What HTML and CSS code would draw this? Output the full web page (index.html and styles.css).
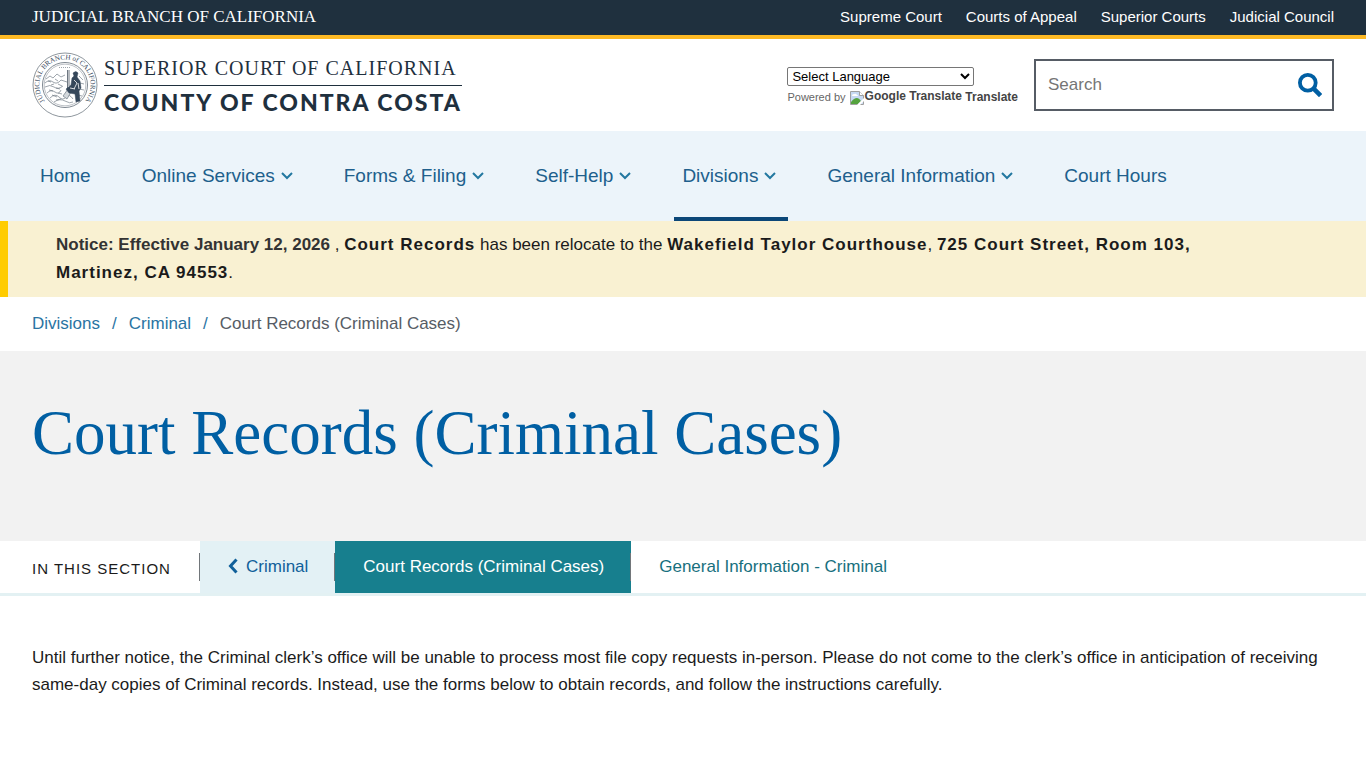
FILE: index.html
```html
<!DOCTYPE html>
<html lang="en">
<head>
    <meta charset="UTF-8">
    <meta name="viewport" content="width=device-width, initial-scale=1.0">
    <title>Court Records (Criminal Cases) | Superior Court of California | County of Contra Costa</title>
    <link rel="stylesheet" href="styles.css">
</head>
<body>

    <div class="topbar">
        <a class="topbar-brand" href="#">JUDICIAL BRANCH OF CALIFORNIA</a>
        <nav class="topbar-links">
            <a href="#">Supreme Court</a>
            <a href="#">Courts of Appeal</a>
            <a href="#">Superior Courts</a>
            <a href="#">Judicial Council</a>
        </nav>
    </div>

    <header class="header">
        <a class="logo" href="#">
            <svg class="seal" viewBox="0 0 66 66" fill="none" stroke="#5d6873">
                <circle cx="33" cy="33" r="32" stroke-width="0.7"/>
                <circle cx="33" cy="33" r="22.5" stroke-width="0.8"/>
                <circle cx="33" cy="33" r="20.8" stroke-width="0.4"/>
                <defs><path id="ring" d="M15 51.4A25.7 25.7 0 1 1 51 51.4"/></defs>
                <text class="seal-text"><textPath href="#ring" startOffset="50%" text-anchor="middle">JUDICIAL BRANCH of CALIFORNIA</textPath></text>
                <g stroke-width="0.6">
                    <path d="M27 15.5h12" stroke-dasharray="1 1"/>
                    <path d="M14 27l4-3 3 2 4-4 4 3 4-2M13 31q4-4 8-1t8-2l6 2M13 35q5-3 9 0t9-1M15 41q4-4 8-1t6-2M18 46q5-5 9-1t7 0 7 2M22 50q6-4 11-1t8 1"/>
                    <path d="M16 29l3 1M23 27l3 2M17 38l4 1M24 36l4 1M47 24l4 4M48 31l4 1M47 37l5 1M46 43l4 1M20 43l5 2M26 41l4 1M24 48l5-1M19 33l3-1M26 32l4 2"/>
                    <path d="M35.5 18v19M37 18v16" stroke-width="0.9"/>
                    <path d="M31 44l5-7 3 3-4 7z" fill="#d3d8dc"/>
                </g>
                <path d="M41 21q3-3 5 0l-1 4 3 4 1 7-2 3 1 10-4 1-1-8-6-1-3-4 5-4 1-7 2-2z" fill="#35475a" stroke="#35475a" stroke-width="0.5"/>
                <path d="M42 28l3 3-3 6M46 31l1 6M38 36l5 1" stroke="#fff" stroke-width="0.8"/>
            </svg>
            <span class="logo-text">
                <span class="logo-court">SUPERIOR COURT OF CALIFORNIA</span>
                <span class="logo-county">COUNTY OF CONTRA COSTA</span>
            </span>
        </a>

        <div class="header-tools">
            <div class="translate">
                <select class="translate-select" aria-label="Select Language">
                    <option>Select Language</option>
                </select>
                <div class="translate-credit">
                    <span>Powered by</span>
                    <a href="#">
                        <svg class="broken-image" viewBox="0 0 16 16">
                            <path d="M1.5 1.5h9l4 4v9h-13z" fill="#c6d9f3" stroke="#a0a0a0"/>
                            <path d="M10.5 1.5v4h4" fill="#fff" stroke="#a0a0a0"/>
                            <path d="M3 6q0-2 2-2 2-1 3 1 1 0 1 1z" fill="#fff"/>
                            <path d="M2 14v-2q3-4 6-4 2 0 4 3l-3 3z" fill="#55a33e"/>
                            <path d="M16 7L7 16h3l6-6z" fill="#fff"/>
                        </svg><span class="translate-alt">Google Translate</span>
                        <span>Translate</span>
                    </a>
                </div>
            </div>
            <form class="search">
                <input class="search-input" type="search" placeholder="Search" aria-label="Search">
                <button class="search-button" type="submit" aria-label="Submit search">
                    <svg viewBox="0 0 24 24" fill="none" stroke="#005fa3">
                        <circle cx="9.8" cy="9.8" r="7.9" stroke-width="3.8"/>
                        <path d="M15.6 15.6L22.6 22.6" stroke-width="4.6"/>
                    </svg>
                </button>
            </form>
        </div>
    </header>

    <nav class="main-nav">
        <a href="#">Home</a>
        <a href="#">Online Services <svg class="chevron" viewBox="0 0 12 8"><path d="M1 1l5 5 5-5"/></svg></a>
        <a href="#">Forms &amp; Filing <svg class="chevron" viewBox="0 0 12 8"><path d="M1 1l5 5 5-5"/></svg></a>
        <a href="#">Self-Help <svg class="chevron" viewBox="0 0 12 8"><path d="M1 1l5 5 5-5"/></svg></a>
        <a class="active" href="#">Divisions <svg class="chevron" viewBox="0 0 12 8"><path d="M1 1l5 5 5-5"/></svg></a>
        <a href="#">General Information <svg class="chevron" viewBox="0 0 12 8"><path d="M1 1l5 5 5-5"/></svg></a>
        <a href="#">Court Hours</a>
    </nav>

    <div class="notice">
        <p><span class="notice-title">Notice: Effective January 12, 2026</span> , <strong>Court Records</strong> has been relocate to the <strong>Wakefield Taylor Courthouse</strong>, <strong>725 Court Street, Room 103, Martinez, CA 94553</strong>.</p>
    </div>

    <nav class="breadcrumb" aria-label="Breadcrumb">
        <a href="#">Divisions</a>
        <span class="slash">/</span>
        <a href="#">Criminal</a>
        <span class="slash">/</span>
        <span>Court Records (Criminal Cases)</span>
    </nav>

    <div class="hero">
        <h1>Court Records (Criminal Cases)</h1>
    </div>

    <nav class="section-nav">
        <span class="section-label">IN THIS SECTION</span>
        <a class="section-parent" href="#"><svg class="back" viewBox="0 0 10 16"><path d="M8.5 1.5L2.5 8l6 6.5"/></svg>Criminal</a>
        <a class="section-current" href="#">Court Records (Criminal Cases)</a>
        <a href="#">General Information - Criminal</a>
    </nav>

    <main class="content">
        <p>Until further notice, the Criminal clerk’s office will be unable to process most file copy requests in-person. Please do not come to the clerk’s office in anticipation of receiving same-day copies of Criminal records. Instead, use the forms below to obtain records, and follow the instructions carefully.</p>
    </main>

</body>
</html>
```

FILE: styles.css
```css
* { box-sizing: border-box; }
body { margin: 0; font-family: "Liberation Sans", Arial, sans-serif; font-size: 17px; line-height: 27px; color: #1b1b1b; background-color: #fff; }
a { color: #205f8c; text-decoration: none; }
p { margin: 0; }

.topbar { display: flex; justify-content: space-between; align-items: center; height: 39px; padding: 0 32px 2px; background-color: #1f303e; border-bottom: 4px solid #fdb924; }
.topbar a { color: #fff; }
.topbar-brand { font-family: "Liberation Serif", serif; font-size: 17px; }
.topbar-links { display: flex; gap: 24px; font-size: 15px; }

.header { display: flex; justify-content: space-between; align-items: center; height: 92px; padding: 0 32px; }
.logo { display: flex; align-items: center; gap: 6px; color: #1f303e; }
.seal { width: 66px; height: 66px; }
.seal-text { font-family: "Liberation Serif", serif; font-size: 7px; fill: #35475a; stroke: none; }
.logo-text { display: flex; flex-direction: column; }
.logo-court { border-bottom: 1px solid #1f303e; font-family: "Liberation Serif", serif; font-size: 20px; line-height: 33px; letter-spacing: 1px; }
.logo-county { font-family: Lato, sans-serif; font-size: 23px; font-weight: 900; line-height: 33px; letter-spacing: 2px; }

.header-tools { display: flex; align-items: center; gap: 16px; }
.translate { display: flex; flex-direction: column; align-items: flex-start; padding-top: 4px; }
.translate-select { width: 187px; height: 19px; padding: 0; border: 1px solid #767676; border-radius: 2px; font-family: "Liberation Sans", Arial, sans-serif; font-size: 13px; color: #000; background-color: #fff; }
.translate-credit { font-size: 11px; line-height: 20px; color: #666; }
.translate-credit a { font-size: 12px; font-weight: bold; color: #444; }
.translate-alt { vertical-align: 1px; }
.broken-image { width: 16px; height: 16px; vertical-align: middle; }
.search { display: flex; width: 300px; height: 52px; border: 2px solid #565c65; }
.search-input { flex: 1; min-width: 0; padding: 0 12px; border: none; font-family: inherit; font-size: 17px; background: none; }
.search-input::placeholder { color: #757575; }
.search-button { display: flex; align-items: center; padding: 0 10px; border: none; background: none; cursor: pointer; }
.search-button svg { width: 24px; height: 24px; }

.main-nav { display: flex; gap: 31px; height: 90px; padding: 0 32px; font-size: 19px; background-color: #ecf4fa; }
.main-nav a { display: flex; align-items: center; gap: 6px; padding: 3px 12px 0 8px; border-bottom: 4px solid transparent; }
.main-nav .active { border-color: #0b4778; }
.chevron { width: 12px; height: 8px; fill: none; stroke: #2378a0; stroke-width: 2; }

.notice { padding: 10px 168px 10px 48px; border-left: 8px solid #ffcc00; line-height: 28px; background-color: #f9f1d2; }
.notice strong { letter-spacing: 1px; }
.notice-title { font-weight: bold; color: #333; }

.breadcrumb { display: flex; gap: 12px; padding: 13px 32px 14px; color: #565c65; }
.breadcrumb a, .slash { color: #2a74a3; }

.hero { height: 190px; padding: 48px 32px; background-color: #f2f2f2; }
h1 { margin: 0; font-family: "Liberation Serif", serif; font-size: 63px; font-weight: normal; line-height: 68px; color: #005fa3; }

.section-nav { display: flex; height: 55px; padding-left: 32px; border-bottom: 3px solid #e3f1f3; }
.section-nav a { position: relative; display: flex; align-items: center; gap: 8px; padding: 0 27px 2px 28px; color: #17707e; }
.section-nav a::before { content: ""; position: absolute; top: 12px; left: -1px; width: 1px; height: 28px; background-color: #71767a; }
.section-label { width: 168px; padding-top: 14px; font-size: 15px; letter-spacing: 1px; }
.section-nav .section-parent { color: #10609a; background-color: #e3f1f5; }
.section-nav .section-current { color: #fff; background-color: #177f8e; }
.back { width: 10px; height: 16px; fill: none; stroke: #10609a; stroke-width: 3; }

.content { padding: 48px 32px; }
```
